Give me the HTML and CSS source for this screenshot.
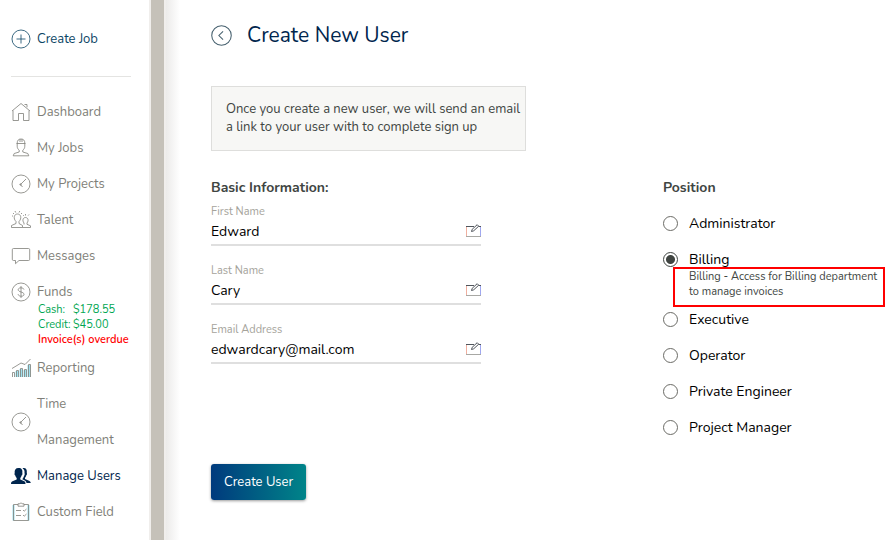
FILE: index.html
```html
<!DOCTYPE html>
<html lang="en">
<head>
  <meta charset="UTF-8" />
  <meta name="viewport" content="width=device-width, initial-scale=1.0" />
  <title>Create New User</title>
  <link rel="stylesheet" href="styles.css">
</head>
<body>
  <!-- shared icons -->
  <svg class="icon-defs" aria-hidden="true">
    <symbol id="icon-gauge" viewBox="0 0 20 20">
      <circle cx="10" cy="10" r="9" />
      <path d="M15 5 9.500 10.500l2 2.500" />
      <circle cx="9.500" cy="10.500" r="0.7" />
    </symbol>
    <symbol id="icon-edit" viewBox="0 0 16 14">
      <path class="edit-left" d="M1.500 3v9" />
      <path class="edit-right" d="M15.500 3v9" />
      <path d="M9 2.500H1M13.500 2.500H16" />
      <path class="edit-base" d="M1 12.500h15" />
      <path d="M6.500 7.500l.7-2.200L12.200.7l1.500 1.500L8.700 6.800z" />
    </symbol>
  </svg>

  <aside class="sidebar">
    <nav>
      <a class="nav-item create" href="#">
        <svg class="icon" viewBox="0 0 20 20"><circle cx="10" cy="10" r="9" /><path d="M10 5.500v9M5.500 10h9" /></svg>
        <span>Create Job</span>
      </a>
      <hr>
      <a class="nav-item" href="#">
        <svg class="icon" viewBox="0 0 20 20"><path d="M1 9 10 1.500 19 9M2 8.500v10h5.500v-7h5v7H18v-10M13.500 2.500h2.500v2.800" /></svg>
        <span>Dashboard</span>
      </a>
      <a class="nav-item" href="#">
        <svg class="icon" viewBox="0 0 20 20"><path d="M5.500 5.500h9M6.200 5.200a3.800 4.200 0 0 1 7.600 0v3c0 2-1 3.200-2 4v1.800l5 1.500 1 2.300H2.200l1-2.300 5-1.500v-1.800c-1-.8-2-2-2-4zM9 1v3M11 1v3" /></svg>
        <span>My Jobs</span>
      </a>
      <a class="nav-item" href="#">
        <svg class="icon"><use href="#icon-gauge" /></svg>
        <span>My Projects</span>
      </a>
      <a class="nav-item" href="#">
        <svg class="icon" viewBox="0 0 20 20"><path d="M5 11.500C2 8.500 3 4 6.500 4s4.500 4.500 1.500 7.500v2l3.500 2v2H.5v-2L5 13.500zM13 13c-2-2.500-1-5.500 1.500-5.500S18 10.500 16 13v1.300l3.500 1.500v1.700h-8M13 13v1.500M2 3l1 1M4 1l.7 1.500M8.800 1 8 2.500M11 3l-1 1M1 6h1M12 5l.8.8M14.500 4v1.500M18 4.500l-.8 1" /></svg>
        <span>Talent</span>
      </a>
      <a class="nav-item" href="#">
        <svg class="icon" viewBox="0 0 20 20"><path d="M2.500 2.500h15a1.200 1.200 0 0 1 1.200 1.200v9.600a1.200 1.200 0 0 1-1.200 1.200H8l-3.500 3.200v-3.200h-2a1.200 1.200 0 0 1-1.200-1.200V3.700a1.200 1.200 0 0 1 1.200-1.200z" /></svg>
        <span>Messages</span>
      </a>
      <a class="nav-item" href="#">
        <svg class="icon" viewBox="0 0 20 20"><circle cx="10" cy="10" r="9" /><path d="M13 7.500C12.500 5.500 7.500 5 7.200 7.600 7 10.400 13 9.500 13 12.400c0 2.600-5.500 2.400-6-.2M10 4v12" /></svg>
        <span>Funds</span>
      </a>
      <div class="balances">
        <div class="balance"><span>Cash:</span><span>$178.55</span></div>
        <div class="balance"><span>Credit:</span><span>$45.00</span></div>
        <div class="overdue">Invoice(s) overdue</div>
      </div>
      <a class="nav-item" href="#">
        <svg class="icon" viewBox="0 0 20 20"><path class="bars" d="M4.500 13h3v6h-3zM8.500 11h3v8h-3zM12.500 12h3v7h-3zM16.500 7h3v12h-3z" /><path d="M1.500 19v-4.500h2V19M5.500 19v-6.500h2V19M9.500 19v-8.500h2V19M13.500 19v-7.500h2V19M17.500 19V6.500h2V19M1 10.500l5-3 4-2.500 4 1.500L19.500 1" /></svg>
        <span>Reporting</span>
      </a>
      <a class="nav-item" href="#">
        <svg class="icon"><use href="#icon-gauge" /></svg>
        <span>Time Management</span>
      </a>
      <a class="nav-item active" href="#">
        <svg class="icon solid" viewBox="0 0 20 20"><path d="M7.500 2c3.200 0 4.300 2 3.800 5 .4 1 0 2-.7 2.500-.3 1.300-.8 2-1.300 2.500v1.500l4 1.700c1 .5 1.200 1.500 1.200 2.800H0c0-1.300.3-2.300 1.500-2.800l4.200-1.700V12c-.6-.5-1.100-1.200-1.400-2.500-.8-.5-1-1.500-.6-2.500C3.300 4 4.500 2 7.500 2z" /><path d="M11.500 2.300c3-.8 4.800 1 4.300 4.700.5 1 0 2-.6 2.400-.3 1.200-.7 1.900-1.200 2.400v1.300l4 1.700c1.200.5 1.700 1.200 1.700 2.200h-4.200c-.3-1.500-1-2.200-2.200-2.700l-2-1c1-1.300 1.400-2.600 1.700-3.300.8-1 .9-2 .5-3 .3-2-.3-3.600-2-4.700z" /></svg>
        <span>Manage Users</span>
      </a>
      <a class="nav-item" href="#">
        <svg class="icon" viewBox="0 0 20 20"><path class="sheet-edge" d="M2.500 3v15.500M17.500 3v15.500" /><path d="M7 2.500H2.500v16h15v-16H13M7 1.800h1.800a1.300 1.300 0 0 1 2.400 0H13v2.400H7zM5 8.500h5M5 13.500h5M12 8l1.200 1.200L15.500 7M12 13l1.200 1.200 2.300-2.200" /></svg>
        <span>Custom Field</span>
      </a>
    </nav>
  </aside>

  <div class="divider"></div>

  <main class="content">
    <header class="page-header">
      <a class="back" href="#" aria-label="Back">
        <svg viewBox="0 0 20 20"><circle cx="10" cy="10" r="9.300" /><path d="M11.500 6 7.500 10l4 4" /></svg>
      </a>
      <h1>Create New User</h1>
    </header>

    <p class="notice">Once you create a new user, we will send an email<br>a link to your user with to complete sign up</p>

    <form>
      <div class="columns">
        <section class="basic">
          <h2>Basic Information:</h2>
          <div class="field">
            <label for="first-name">First Name</label>
            <div class="field-row">
              <input type="text" id="first-name" value="Edward">
              <svg class="edit"><use href="#icon-edit" /></svg>
            </div>
          </div>
          <div class="field">
            <label for="last-name">Last Name</label>
            <div class="field-row">
              <input type="text" id="last-name" value="Cary">
              <svg class="edit"><use href="#icon-edit" /></svg>
            </div>
          </div>
          <div class="field">
            <label for="email">Email Address</label>
            <div class="field-row">
              <input type="text" id="email" value="edwardcary@mail.com">
              <svg class="edit"><use href="#icon-edit" /></svg>
            </div>
          </div>
        </section>

        <section class="position">
          <h2>Position</h2>
          <label class="option"><input type="radio" name="position"><span>Administrator</span></label>
          <label class="option"><input type="radio" name="position" checked><span>Billing</span></label>
          <p class="hint">Billing - Access for Billing department<br>to manage invoices</p>
          <label class="option"><input type="radio" name="position"><span>Executive</span></label>
          <label class="option"><input type="radio" name="position"><span>Operator</span></label>
          <label class="option"><input type="radio" name="position"><span>Private Engineer</span></label>
          <label class="option"><input type="radio" name="position"><span>Project Manager</span></label>
        </section>
      </div>

      <button type="submit" class="submit">Create User</button>
    </form>
  </main>
</body>
</html>
```
FILE: styles.css
```css
:root {
  --navy: #00254d;
  --grey: #7f7f79;
  --text: #404542;
  --green: #00a651;
  --red: #ff0000;
}

* {
  box-sizing: border-box;
}

body {
  margin: 0;
  min-height: 100vh;
  display: flex;
  background: #fff;
  color: #000;
  font-family: Nunito, Roboto, sans-serif;
  font-size: 14px;
}

a {
  color: inherit;
  text-decoration: none;
}

svg {
  fill: none;
  stroke: currentColor;
  stroke-width: 1;
}

.icon-defs {
  position: absolute;
  width: 0;
  height: 0;
}

/* sidebar */
.sidebar {
  flex: 0 0 149px;
  padding: 21px 18px 0 11px;
}

.sidebar hr {
  height: 1px;
  margin: 19px 0 17px;
  border: 0;
  background: #e4e4e2;
}

.nav-item {
  display: flex;
  align-items: center;
  gap: 6px;
  color: var(--grey);
  font-size: 13px;
  line-height: 36px;
}

.nav-item.create {
  color: #0b4565;
}

.nav-item.active {
  color: var(--navy);
}

.icon {
  flex: none;
  width: 20px;
  height: 20px;
  stroke-width: 0.8;
}

.icon.solid {
  fill: currentColor;
  stroke: none;
}

.icon .bars {
  fill: #9fe0ee;
  stroke: none;
}

.icon .sheet-edge {
  stroke: #9fe0ee;
  stroke-width: 2;
}

.balances {
  margin: -8px 0 3px 27px;
  color: var(--green);
  font-size: 11px;
  line-height: 15px;
}

.balance {
  display: grid;
  grid-template-columns: 35px 1fr;
}

.overdue {
  color: var(--red);
  font-weight: 600;
  white-space: nowrap;
}

.divider {
  flex: 0 0 17px;
  background: #c5c1b9;
  border: solid #f0eeec;
  border-width: 0 2px;
}

/* main area */
.content {
  flex: 1;
  padding: 21px 0 0 45px;
  background: linear-gradient(to right, #ecebea, #fff 14px);
}

.page-header {
  display: flex;
  align-items: center;
  gap: 15px;
  height: 28px;
}

.back {
  display: flex;
  color: #46606e;
}

.back svg {
  width: 21px;
  height: 21px;
}

h1 {
  margin: 0;
  color: var(--navy);
  font-size: 21px;
  font-weight: 400;
}

h2 {
  margin: 0;
  color: var(--text);
  font-size: 14px;
  font-weight: 700;
  line-height: 20px;
}

.notice {
  max-width: 315px;
  margin: 37px 0 27px;
  padding: 13px 4px 14px 14px;
  border: 1px solid #dededc;
  background: #f7f7f5;
  color: var(--text);
  font-size: 13px;
  line-height: 18px;
}

.columns {
  display: flex;
}

.basic {
  flex: 2;
}

.position {
  flex: 1;
  min-width: 0;
}

.field {
  max-width: 270px;
  height: 59px;
  padding-top: 6px;
}

.field label {
  display: block;
  color: #a5a39b;
  font-size: 11px;
  line-height: 16px;
}

.field-row {
  display: flex;
  align-items: center;
  height: 26px;
  padding-bottom: 2px;
  border-bottom: 2px solid #dfdfdf;
}

.field input {
  flex: 1;
  min-width: 0;
  padding: 0;
  border: 0;
  outline: 0;
  background: none;
  color: inherit;
  font: inherit;
}

.edit {
  width: 16px;
  height: 14px;
  color: #50555c;
}

.edit-left {
  stroke: #f0b0a0;
}

.edit-right {
  stroke: #a0a8f0;
}

.edit-base {
  stroke: #a8a8a4;
}

.option {
  display: flex;
  align-items: center;
  gap: 11px;
  height: 36px;
}

.option:first-of-type {
  margin-top: 7px;
}

.option input {
  appearance: none;
  flex: none;
  width: 15px;
  height: 15px;
  margin: 0;
  border: 1px solid #6b6b66;
  border-radius: 50%;
}

.option input:checked {
  border-color: var(--text);
  background: radial-gradient(circle, var(--text) 4px, transparent 5px);
}

/* sits tight under the option it describes */
.hint {
  position: relative;
  height: 40px;
  margin: -10px 4px -6px 10px;
  padding: 0 14px;
  border: 2px solid var(--red);
  color: var(--text);
  font-size: 11px;
  line-height: 15px;
  white-space: nowrap;
}

.submit {
  display: block;
  height: 36px;
  margin-top: 19px;
  padding: 0 13px;
  border: 0;
  border-radius: 3px;
  background: linear-gradient(to right, #003a7d, #008489);
  box-shadow: 0 1px 3px rgba(0, 0, 0, 0.4);
  color: #fff;
  font: inherit;
  font-size: 13px;
}
```
